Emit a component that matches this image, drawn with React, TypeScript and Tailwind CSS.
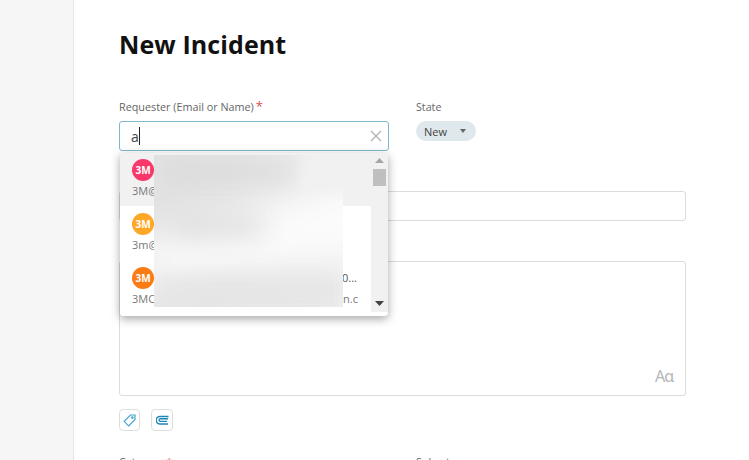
import React from "react";

const font = { fontFamily: '"Open Sans", "Liberation Sans", sans-serif' };

function Row({ color, sub, bg, h, pt }: { color: string; sub: string; bg: string; h: string; pt: string }) {
  return (
    <div className={`${bg} ${h} ${pt} pl-3`}>
      <div className="w-[22px] h-[22px] rounded-full flex items-center justify-center text-white text-[10px] font-bold" style={{ background: color }}>3M</div>
      <div className="mt-[2px] text-[11px] leading-[16px] text-[#777]">{sub}</div>
    </div>
  );
}

export default function App() {
  return (
    <div className="w-[749px] h-[460px] overflow-hidden flex bg-white" style={font}>
      <div className="w-[74px] shrink-0 bg-[#f6f6f6] border-r border-[#e6e6e6]" />
      <div className="flex-1 pl-[45px] pr-[63px] pt-[25px]">
        <h1 className="text-[25px] leading-[38px] font-bold text-[#111] tracking-[0.1px]">New Incident</h1>

        <div className="flex mt-[36px]">
          <div className="w-[297px] relative">
            <div className="text-[10.8px] leading-[16px] text-[#666]">
              Requester (Email or Name)<span className="text-[#e0484a] text-[13px] leading-[10px] ml-[2px]">*</span>
            </div>
            <div className="mt-[6px] w-[270px] h-[30px] border border-[#82b6c9] rounded-[3px] flex items-center pl-[11px] pr-[6px]">
              <span className="text-[14px] text-[#444]">a</span>
              <span className="w-px h-[18px] bg-[#222]" />
              <svg className="ml-auto" width="12" height="12" viewBox="0 0 12 12" stroke="#b5b5b5" strokeWidth="1.4" fill="none"><path d="M1 1l10 10M11 1L1 11" /></svg>
            </div>

            <div className="absolute left-[1px] top-[54px] w-[268px] h-[163px] bg-white rounded-b-[4px] shadow-[0_3px_10px_rgba(0,0,0,0.35)] z-10 overflow-hidden flex">
              <div className="w-[251px] overflow-hidden">
                <Row color="#f8386b" sub="3M@" bg="bg-[#f1f1f1]" h="h-[53px]" pt="pt-[6px]" />
                <Row color="#ffa726" sub="3m@" bg="bg-white" h="h-[54px]" pt="pt-[7px]" />
                <div className="bg-white h-[56px] pl-3 pt-[7px]">
                  <div className="flex items-center h-[22px]">
                    <div className="w-[22px] h-[22px] rounded-full flex items-center justify-center text-white text-[10px] font-bold bg-[#fb7c14]">3M</div>
                    <div className="ml-auto pr-[14px] text-[11px] text-[#555]">0...</div>
                  </div>
                  <div className="flex mt-[2px] text-[11px] leading-[16px] text-[#777]">
                    <span>3MC</span>
                    <span className="ml-auto mr-[13px] w-[15px] overflow-hidden whitespace-nowrap">n.co</span>
                  </div>
                </div>
              </div>
              <div className="w-[17px] h-[159px] bg-[#f1f1f1] flex flex-col items-center relative">
                <svg className="mt-[5px]" width="9" height="5" viewBox="0 0 9 5" fill="#a6a6a6"><path d="M4.5 0L9 5H0z" /></svg>
                <div className="mt-[6px] w-[13px] h-[17px] bg-[#bfbfbf]" />
                <svg className="mt-auto mb-[6px]" width="9" height="5" viewBox="0 0 9 5" fill="#444"><path d="M0 0h9L4.5 5z" /></svg>
              </div>
              <div className="absolute left-[34px] top-[2px] w-[189px] h-[152px] bg-[linear-gradient(100deg,#e2e2e2_0%,#e6e6e6_40%,#ececec_60%,#f2f2f2_100%)] overflow-hidden">
                <div className="absolute left-[-20px] top-[55px] w-[260px] h-[60px] bg-white/80 blur-[18px] rotate-[-14deg]" />
                <div className="absolute left-[10px] top-[4px] w-[130px] h-[26px] bg-[#d6d6d6]/60 blur-[12px]" />
                <div className="absolute left-[20px] top-[60px] w-[90px] h-[24px] bg-[#dadada]/70 blur-[12px]" />
                <div className="absolute left-[0px] top-[118px] w-[189px] h-[40px] bg-[#e4e4e4]/80 blur-[10px]" />
                <div className="absolute left-[148px] top-[0px] w-[45px] h-[38px] bg-[#f1f1f1] blur-[5px]" />
              </div>
            </div>
          </div>
          <div>
            <div className="text-[10.7px] leading-[16px] text-[#666]">State</div>
            <div className="mt-[6px] w-[60px] h-[20px] rounded-full bg-[#dfe8ec] flex items-center pl-2 pr-[10px]">
              <span className="text-[11px] leading-[16px] pt-[1px] text-[#444]">New</span>
              <svg className="ml-auto" width="6" height="4" viewBox="0 0 6 4" fill="#666"><path d="M0 0h6L3 4z" /></svg>
            </div>
          </div>
        </div>

        <div className="mt-[40px] h-[30px] border border-[#dcdcdc] rounded-[3px]" />

        <div className="mt-[40px] h-[135px] border border-[#dcdcdc] rounded-[3px] flex items-end justify-end pr-[12px] pb-[10px]">
          <span className="font-['Noto_Sans'] text-[16px] leading-[18px] tracking-[-1px] text-[#b5b5b5]">Aɑ</span>
        </div>

        <div className="mt-[13px] flex gap-[11px]">
          <div className="w-[21px] h-[22px] border border-[#dedede] rounded-[4px] flex items-center justify-center">
            <svg width="15" height="15" viewBox="0 0 15 15" fill="none" stroke="#45a5d0" strokeWidth="1.2"><path d="M8.5 2h4.5v4.5l-6.3 6.3-4.5-4.5z" /><circle cx="10.4" cy="4.6" r="0.7" fill="#45a5d0" /></svg>
          </div>
          <div className="w-[22px] h-[22px] border border-[#dedede] rounded-[4px] flex items-center justify-center">
            <svg width="13" height="11" viewBox="0 0 13 11" fill="none" stroke="#1f86b8" strokeWidth="1.4"><path d="M12.5 1.5H4a3 3 0 0 0 0 7.5h8M12 3.8H4.4a1.2 1.2 0 0 0 0 2.6H11" /></svg>
          </div>
        </div>

        <div className="mt-[23px] flex text-[10.7px] leading-[16px] text-[#666]">
          <div className="w-[297px]">Category <span className="text-[#d9534f]">*</span></div>
          <div>Subcategory</div>
        </div>
      </div>
    </div>
  );
}
